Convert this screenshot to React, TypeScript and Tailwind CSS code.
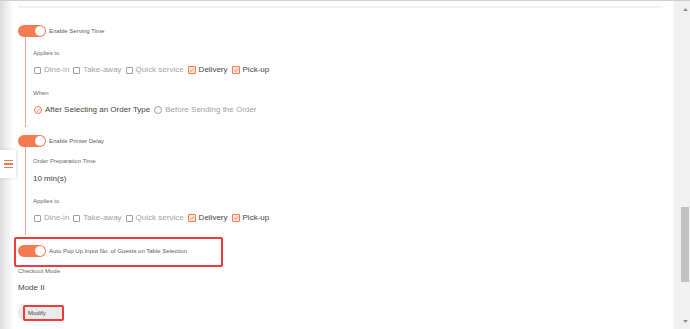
import React from 'react';

const ORANGE = 'bg-[#f57b52]';

function Toggle({ label }: { label: string }) {
  return (
    <div className="flex items-center h-[12px]">
      <div className={`relative w-[28px] h-[12px] rounded-full ${ORANGE}`}>
        <div className="absolute right-[1px] top-[1px] w-[10px] h-[10px] rounded-full bg-white" />
      </div>
      <span className="ml-[3px] text-[6px] leading-[8px] text-[#5a5a5a]">{label}</span>
    </div>
  );
}

function Check({ checked }: { checked: boolean }) {
  if (!checked) {
    return <span className="w-[7px] h-[7px] border border-[#a0a0a0] rounded-[1px] bg-white shrink-0" />;
  }
  return (
    <span className="w-[8px] h-[8px] border border-[#f57b52] rounded-[1px] bg-[#fde4d9] shrink-0 flex items-center justify-center">
      <svg viewBox="0 0 8 8" className="w-[6px] h-[6px]">
        <path d="M1.5 4.2 L3.2 5.8 L6.5 2.2" fill="none" stroke="#f57b52" strokeWidth="1.2" />
      </svg>
    </span>
  );
}

function Radio({ checked }: { checked: boolean }) {
  return (
    <span
      className={`w-[8px] h-[8px] rounded-full border shrink-0 flex items-center justify-center ${
        checked ? 'border-[#f57b52]' : 'border-[#a0a0a0]'
      }`}
    >
      {checked && (
        <svg viewBox="0 0 8 8" className="w-[6px] h-[6px]">
          <path d="M1.8 4.2 L3.4 5.6 L6.2 2.6" fill="none" stroke="#f57b52" strokeWidth="1.1" />
        </svg>
      )}
    </span>
  );
}

const orderTypes = [
  { name: 'Dine-in', on: false },
  { name: 'Take-away', on: false },
  { name: 'Quick service', on: false },
  { name: 'Delivery', on: true },
  { name: 'Pick-up', on: true },
];

function AppliesRow() {
  return (
    <div className="flex items-center h-[10px] gap-[4px] pl-[1px]">
      {orderTypes.map((t) => (
        <label key={t.name} className="flex items-center gap-[3px]">
          <Check checked={t.on} />
          <span className={`text-[8px] leading-[10px] ${t.on ? 'text-[#444]' : 'text-[#a3a3a3]'}`}>{t.name}</span>
        </label>
      ))}
    </div>
  );
}

function Small({ children, className = '' }: { children: React.ReactNode; className?: string }) {
  return <div className={`text-[6px] leading-[8px] text-[#6a6a6a] ${className}`}>{children}</div>;
}

export default function App() {
  return (
    <div className="w-[690px] h-[329px] flex overflow-hidden bg-white border-t border-[#cfcfcf] font-['Liberation_Sans',Arial,sans-serif]">
      {/* page */}
      <div className="relative flex-1 flex">
        <div className="w-[13px] bg-gradient-to-r from-[#dcdcdc] to-white" />

        {/* floating menu tab */}
        <div className="absolute left-0 top-[149px] w-[16px] h-[28px] bg-white shadow-[1px_0_3px_rgba(0,0,0,0.12)] flex flex-col items-center justify-center gap-[2px]">
          <span className="w-[9px] h-[1.5px] bg-[#f57b52]" />
          <span className="w-[9px] h-[1.5px] bg-[#f57b52]" />
          <span className="w-[9px] h-[1.5px] bg-[#f57b52]" />
        </div>

        <div className="flex-1 pl-[5px]">
          <div className="mt-[5px] h-[2px] w-[645px] bg-[#f2f2f2]" />

          {/* Serving time */}
          <div className="mt-[17px]">
            <Toggle label="Enable Serving Time" />
            <div className="ml-[7px] border-l border-[#f8a385] pl-[7px] pt-[12px] pb-[12px]">
              <Small>Applies to</Small>
              <div className="mt-[8px]">
                <AppliesRow />
              </div>
              <Small className="mt-[14px]">When</Small>
              <div className="mt-[8px] flex items-center h-[10px] gap-[3px] pl-[1px]">
                <Radio checked />
                <span className="text-[8px] leading-[10px] text-[#444]">After Selecting an Order Type</span>
                <span className="ml-[1px]">
                  <Radio checked={false} />
                </span>
                <span className="text-[8px] leading-[10px] text-[#a3a3a3]">Before Sending the Order</span>
              </div>
            </div>
          </div>

          {/* Printer delay */}
          <div className="mt-[8px]">
            <Toggle label="Enable Printer Delay" />
            <div className="ml-[7px] border-l border-[#f8a385] pl-[7px] pt-[10px] pb-[12px]">
              <Small>Order Preparation Time</Small>
              <div className="mt-[9px] text-[8px] leading-[10px] text-[#444]">10 min(s)</div>
              <Small className="mt-[13px]">Applies to</Small>
              <div className="mt-[8px]">
                <AppliesRow />
              </div>
            </div>
          </div>

          {/* Guests popup */}
          <div className="mt-[2px] -ml-[4px] w-[209px] h-[30px] border-2 border-[#f23a3a] rounded-[2px] pt-[6px] pl-[2px]">
            <Toggle label="Auto Pop Up Input No. of Guests on Table Selection" />
          </div>

          <Small>Checkout Mode</Small>
          <div className="mt-[8px] text-[8px] leading-[10px] text-[#444]">Mode II</div>
          <div className="mt-[12px] w-[46px] h-[16px] rounded-full bg-[#ebebeb] pl-[5px] flex">
            <span className="w-[41px] h-full border-2 border-[#f23a3a] rounded-[2px] pl-[3px] flex items-center text-[6px] text-[#444]">
              Modify
            </span>
          </div>
        </div>
      </div>

      {/* scrollbar */}
      <div className="w-[17px] flex flex-col bg-[#f1f1f1] border-l border-[#f7f7f7]">
        <div className="h-[16px] flex items-center justify-center pl-[6px]">
          <svg viewBox="0 0 6 4" className="w-[5px] h-[3px]">
            <path d="M0 4 L3 0 L6 4 Z" fill="#8a8a8a" />
          </svg>
        </div>
        <div className="flex-1">
          <div className="mt-[190px] ml-[7px] w-[8px] h-[75px] bg-[#c1c1c1]" />
        </div>
        <div className="h-[16px] flex items-center justify-center pl-[6px]">
          <svg viewBox="0 0 6 4" className="w-[5px] h-[3px]">
            <path d="M0 0 L6 0 L3 4 Z" fill="#8a8a8a" />
          </svg>
        </div>
      </div>
    </div>
  );
}
